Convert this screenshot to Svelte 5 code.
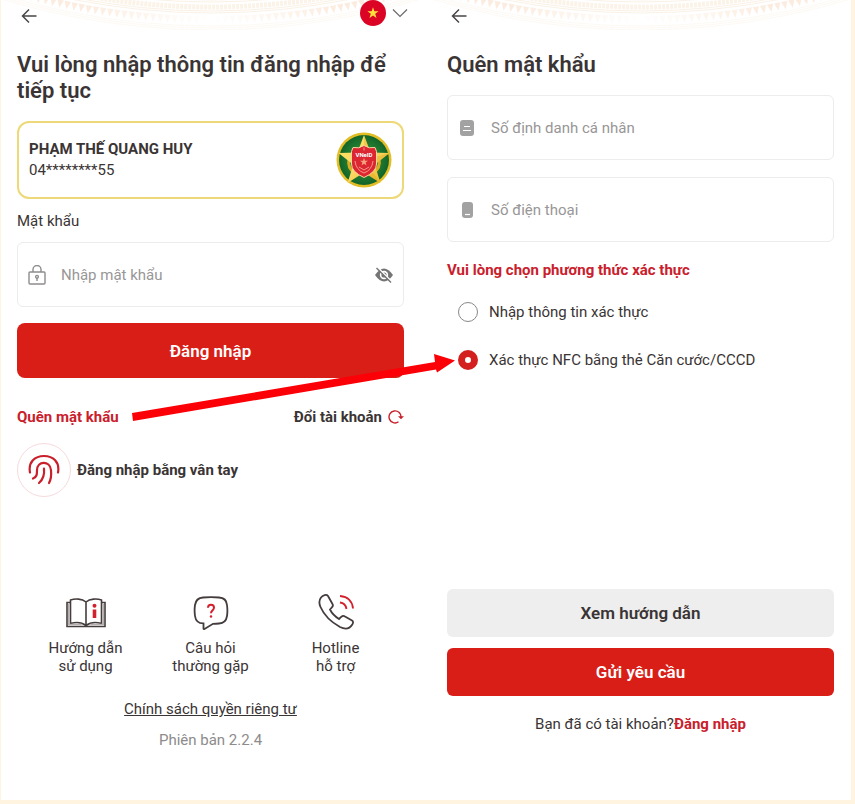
<script lang="ts">
  let idNumber = $state('');
  let phone = $state('');
  let password = $state('');
  let showPassword = $state(false);
  let method = $state('nfc');

  const methods = [
    { value: 'info', label: 'Nhập thông tin xác thực' },
    { value: 'nfc', label: 'Xác thực NFC bằng thẻ Căn cước/CCCD' }
  ];

  // bronze drum ornament: small triangles along an arc
  const drumR = 720;
  const teeth = Array.from({ length: 61 }, (_, i) => {
    const a = ((i - 30) * 0.58 * Math.PI) / 180;
    const point = (r: number, t: number) =>
      `${(210 + r * Math.sin(t)).toFixed(1)},${(24 - drumR + r * Math.cos(t)).toFixed(1)}`;
    return {
      points: `${point(drumR - 8, a - 0.0045)} ${point(drumR - 8, a + 0.0045)} ${point(drumR, a)}`,
      opacity: Math.min(Math.abs(i - 30) / 30, 0.6)
    };
  });
  const rings = [-24, -22, -13, -11, 2, 4, 6];
</script>

{#snippet drum()}
  <svg class="drum" viewBox="0 0 420 30" aria-hidden="true">
    {#each rings as d}
      <circle cx="210" cy={24 - drumR} r={drumR + d} fill="none" stroke="#f9eedf" stroke-width="1" opacity={d > 0 ? 0.35 : 0.8} />
    {/each}
    <circle cx="210" cy={24 - drumR} r={drumR - 17} fill="none" stroke="#f9ebd8" stroke-width="5" stroke-dasharray="3 1" opacity="0.6" />
    {#each teeth as t}
      <polygon points={t.points} fill="#fae0cb" opacity={t.opacity} />
    {/each}
  </svg>
{/snippet}

{#snippet backButton()}
  <button type="button" class="icon-btn" aria-label="Quay lại">
    <svg width="16" height="16" viewBox="0 0 16 16" fill="none" stroke="#4a4646" stroke-width="1.5">
      <path d="M15.500 8H1.500M8 1.500 1.500 8 8 14.500" />
    </svg>
  </button>
{/snippet}

<main class="board">
  <section class="panel">
    {@render drum()}
    <header class="top">
      {@render backButton()}
      <button type="button" class="icon-btn lang" aria-label="Ngôn ngữ">
        <svg width="26" height="26" viewBox="0 0 26 26">
          <circle cx="13" cy="13" r="13" fill="#dc0424" />
          <path d="m13 7.200 1.400 4h4.200l-3.400 2.600 1.300 4.100-3.500-2.500-3.500 2.500 1.300-4.100-3.400-2.600h4.200z" fill="#ffdf3d" />
        </svg>
        <svg width="16" height="10" viewBox="0 0 16 10" fill="none" stroke="#6b6868" stroke-width="1.200">
          <path d="m1 1.500 7 7 7-7" />
        </svg>
      </button>
    </header>

    <h1>Vui lòng nhập thông tin đăng nhập để tiếp tục</h1>

    <div class="account">
      <div>
        <strong>PHẠM THẾ QUANG HUY</strong>
        <span>04********55</span>
      </div>
      <svg width="56" height="56" viewBox="0 0 56 56" aria-hidden="true">
        <defs>
          <linearGradient id="gold" x1="0" y1="0" x2="1" y2="1">
            <stop offset="0" stop-color="#ffe45a" />
            <stop offset="0.5" stop-color="#fbd968" />
            <stop offset="1" stop-color="#e8b71c" />
          </linearGradient>
          <radialGradient id="green">
            <stop offset="0.4" stop-color="#2c8a35" />
            <stop offset="1" stop-color="#126428" />
          </radialGradient>
        </defs>
        <circle cx="28" cy="28" r="27.500" fill="#e2bd26" />
        <circle cx="28" cy="28" r="25" fill="url(#green)" />
        <path d="M13 27q-2 9 6 14M43 27q2 9-6 14" fill="none" stroke="#dcae20" stroke-width="3" />
        <path d="m28 3 6.500 17.500 19 .500-14.800 11.700L44.500 51 28 40.500 11.500 51l5.800-18.300L2.500 21l19-.500z" fill="url(#gold)" />
        <path d="M28 3v25l6.500-7.500zM28 28l25.500-7-14.800 11.700zM28 28l16.500 23L28 40.500z" fill="#d99d16" opacity="0.300" />
        <path d="M17 15.500q6 1.500 11-2 5 3.500 11 2l1.500 4V32q0 8-12.500 13.500Q15.500 40 15.500 32V19.500z" fill="#dc2632" stroke="#f4d7a0" stroke-width="1" />
        <path d="m28 26 1 2.800h3l-2.400 1.800.9 3-2.500-1.800-2.500 1.800.9-3-2.400-1.800h3z" fill="#f7a27d" />
        <path d="M19 29q1 9 9 12 8-3 9-12M23 35l5 3 5-3M28 15.500v3" fill="none" stroke="#f49a86" stroke-width="1" />
        <text x="28" y="24.500" text-anchor="middle" class="badge-text">VNeID</text>
      </svg>
    </div>

    <label class="label" for="password">Mật khẩu</label>
    <div class="field">
      <svg width="18" height="20" viewBox="0 0 18 20" fill="none" stroke="#8e8c8c" stroke-width="1.400">
        <rect x="1" y="7" width="16" height="12" rx="1" />
        <path d="M5 7V4.500a4 4 0 0 1 8 0V7M9 13v3" />
        <circle cx="9" cy="11.800" r="1.400" />
      </svg>
      <input id="password" type={showPassword ? 'text' : 'password'} placeholder="Nhập mật khẩu" bind:value={password} />
      <button type="button" class="icon-btn" aria-label="Hiện mật khẩu" onclick={() => (showPassword = !showPassword)}>
        <svg width="20" height="16" viewBox="0 0 20 16">
          <path d="M1 8q9-13 18 0-9 13-18 0z" fill="#757575" />
          <circle cx="10" cy="8" r="4.200" fill="#fff" />
          <circle cx="10" cy="8" r="2.600" fill="#757575" />
          <path d="M3.700.6 18.200 15" stroke="#fff" stroke-width="1.600" />
          <path d="M2.500 1 17 15.500" stroke="#757575" stroke-width="1.400" />
        </svg>
      </button>
    </div>

    <button type="button" class="btn primary tall">Đăng nhập</button>

    <div class="links">
      <a class="red" href="#forgot">Quên mật khẩu</a>
      <a class="switch" href="#switch">
        Đổi tài khoản
        <svg width="16" height="14" viewBox="0 0 16 14" fill="none" stroke="#c9202c" stroke-width="1.400">
          <path d="M10.500 11.800A6 6 0 1 1 13 7.500" />
          <path d="M10 6.200h6l-3 3z" fill="#c9202c" stroke="none" />
        </svg>
      </a>
    </div>

    <button type="button" class="finger">
      <span class="finger-ring">
        <svg width="32" height="32" viewBox="0 0 32 32" fill="none" stroke="#c9202c" stroke-width="2.200" stroke-linecap="round">
          <path d="M2 18.500C0 8 7 2 16 2s16 6 14 16.500" />
          <path d="M5 24.500c4-1.500 4-4.500 4-8C9 6.500 22 6.500 23 16c.5 5 .5 8.500-2 13" />
          <path d="M16 14.500c.6 6-.8 11-5 14.500" />
        </svg>
      </span>
      Đăng nhập bằng vân tay
    </button>

    <nav class="help">
      <a href="#guide">
        <svg width="40" height="34" viewBox="0 0 40 34" fill="none" stroke="#453d3d" stroke-width="1.600">
          <path d="M20 6C16 2.500 9 2.500 4.500 4v23.500c5-1.500 11-1.500 15.500 2 4.500-3.500 10.500-3.500 15.500-2V4C31 2.500 24 2.500 20 6zv23" />
          <path d="M4.500 6.500H1v24h38v-24h-3.500" />
          <path d="M2.800 8v20.500h13M37.200 8v20.500h-13" stroke="#b5aeae" />
          <path d="M28.500 13.500v8.500" stroke="#d2202c" stroke-width="3.600" />
          <circle cx="28.500" cy="9.800" r="2" fill="#d2202c" stroke="none" />
        </svg>
        <span>Hướng dẫn<br />sử dụng</span>
      </a>
      <a href="#faq">
        <svg width="36" height="34" viewBox="0 0 36 34" fill="none" stroke="#453d3d" stroke-width="1.800">
          <path d="M10 1.500q8-.6 16 0 7.500.500 8 7.500.8 6 0 11-1 7-8 7.500-3 .300-6 .3L11.500 33q-1 .5-1-.6v-5Q3 27.500 2 20q-.8-5.500 0-11 1-7 8-7.500z" />
          <path d="M15 11.800c0-4 6-4 6 0 0 2.400-3 2.500-3 5.500" stroke="#d2202c" stroke-width="2" />
          <circle cx="18" cy="20.500" r="1.200" fill="#d2202c" stroke="none" />
        </svg>
        <span>Câu hỏi<br />thường gặp</span>
      </a>
      <a href="#hotline">
        <svg width="36" height="36" viewBox="0 0 36 36" fill="none" stroke="#453d3d" stroke-width="1.800">
          <path d="M3 3.500C5 1 8.500 0 10 2l4.500 8c1 1.600.3 2.500-2.500 5.500 2 4 5 7 9 9.500 3-3 4-3.800 6-2.500l7 4c1.500 1 1.300 2.500.3 4-2.500 4-6.500 5.500-12.300 2.500C13 28 6 21 2.500 13 .8 9 1 6 3 3.500z" />
          <path d="M22 8.500c4 .5 6 3 6.500 6.500M22 2c8 .5 12.500 5.500 13 12.500" stroke="#d2202c" />
        </svg>
        <span>Hotline<br />hỗ trợ</span>
      </a>
    </nav>
    <a class="privacy" href="#privacy">Chính sách quyền riêng tư</a>
    <p class="version">Phiên bản 2.2.4</p>
  </section>

  <section class="panel">
    {@render drum()}
    <header class="top">
      {@render backButton()}
    </header>

    <h1>Quên mật khẩu</h1>

    <div class="fields">
      <div class="field">
        <svg width="18" height="18" viewBox="0 0 18 18">
          <rect x="2" y="1" width="14" height="16" rx="3" fill="#a2a2a2" />
          <path d="M6 7.500h6M5 11.500h8" stroke="#fff" stroke-width="1.200" />
        </svg>
        <input type="text" aria-label="Số định danh cá nhân" placeholder="Số định danh cá nhân" bind:value={idNumber} />
      </div>
      <div class="field">
        <svg width="18" height="18" viewBox="0 0 18 18">
          <rect x="4" y="1" width="11" height="16" rx="3" fill="#a2a2a2" />
          <path d="M7 13.500h5" stroke="#fff" stroke-width="1.200" />
        </svg>
        <input type="tel" aria-label="Số điện thoại" placeholder="Số điện thoại" bind:value={phone} />
      </div>
    </div>

    <fieldset class="methods">
      <legend>Vui lòng chọn phương thức xác thực</legend>
      {#each methods as m}
        <label>
          <input type="radio" name="method" value={m.value} bind:group={method} />
          {m.label}
        </label>
      {/each}
    </fieldset>

    <div class="actions">
      <button type="button" class="btn secondary">Xem hướng dẫn</button>
      <button type="button" class="btn primary">Gửi yêu cầu</button>
      <p>Bạn đã có tài khoản?<a class="red" href="#login">Đăng nhập</a></p>
    </div>
  </section>

  <svg class="pointer" width="324" height="70" viewBox="0 0 324 70" aria-hidden="true">
    <path d="M1 61 304 10 303 2 324 8.500 306 20.500 305 17.500 2 69z" fill="#fb0007" />
  </svg>
</main>

<style>
  :global(body) { margin: 0; background: #fff4df; }
  .board {
    position: relative;
    display: grid;
    grid-template-columns: 1fr 1fr;
    column-gap: 43px;
    box-sizing: border-box;
    min-height: calc(100vh - 4px);
    margin: 0 4px 4px 1px;
    padding: 0 17px 0 16px;
    background: #fff;
    color: #3a3434;
    font-family: Roboto, "Noto Sans", sans-serif;
    font-size: 15px;
    line-height: 20px;
    overflow: hidden;
  }
  .panel { position: relative; display: flex; flex-direction: column; }
  .drum { position: absolute; top: 0; left: -16px; width: calc(100% + 33px); }
  .top {
    position: relative;
    display: flex;
    justify-content: space-between;
    height: 32px;
    padding-left: 4px;
    margin-bottom: 20px;
  }
  a { color: inherit; text-decoration: none; }
  p { margin: 0; }
  button { font: inherit; color: inherit; cursor: pointer; }
  .icon-btn { display: flex; align-items: center; padding: 0; border: 0; background: none; }
  .lang { gap: 6px; height: 26px; margin-right: -4px; }
  h1 { margin: 0 0 17px; font-size: 22px; line-height: 26px; font-weight: 600; }

  .account {
    display: flex;
    align-items: center;
    justify-content: space-between;
    padding: 9px 10px;
    border: 2px solid #eed978;
    border-radius: 12px;
  }
  .account strong, .account span { display: block; line-height: 21px; }
  .badge-text { font-size: 6px; font-weight: 700; fill: #fff; }
  .label { margin: 12px 0 11px; }

  .field {
    display: flex;
    align-items: center;
    gap: 15px;
    height: 63px;
    padding: 0 9px 0 10px;
    border: 1px solid #ececec;
    border-radius: 6px;
  }
  .field input {
    flex: 1;
    min-width: 0;
    padding: 0;
    border: 0;
    outline: none;
    background: none;
    font: inherit;
    color: inherit;
  }
  .field input::placeholder { color: #989696; opacity: 1; }
  .fields { display: flex; flex-direction: column; gap: 17px; }

  .btn { height: 48px; border: 0; border-radius: 6px; font-size: 17px; font-weight: 600; }
  .tall { height: 55px; margin-top: 16px; border-radius: 8px; }
  .primary { background: #d91e18; color: #fff; }
  .secondary { background: #eee; }

  .account strong, .links, .finger, .methods legend, .red { font-weight: 700; }

  .links { display: flex; justify-content: space-between; margin-top: 29px; }
  .red { color: #c9202c; }
  .switch { display: flex; align-items: center; gap: 6px; }
  .finger {
    display: flex;
    align-items: center;
    align-self: flex-start;
    gap: 6px;
    margin-top: 16px;
    padding: 0;
    border: 0;
    background: none;
  }
  .finger-ring {
    display: grid;
    place-items: center;
    width: 52px;
    height: 52px;
    border: 1px solid #f7dadd;
    border-radius: 50%;
  }

  .help {
    display: grid;
    grid-template-columns: repeat(3, 1fr);
    margin: auto 6px 24px;
    line-height: 18px;
    text-align: center;
  }
  .help a { display: flex; flex-direction: column; align-items: center; justify-content: flex-end; gap: 9px; }
  .privacy { align-self: center; text-decoration: underline; }
  .version { margin: 11px 0 50px; color: #8d8b8b; text-align: center; }

  .methods { margin: 18px 0 0; padding: 0; border: 0; }
  .methods legend { padding: 0; color: #c9202c; }
  .methods label { display: flex; align-items: center; gap: 11px; margin: 22px 0 28px 11px; }
  .methods label + label { margin-top: 0; }
  .methods input {
    appearance: none;
    box-sizing: border-box;
    width: 20px;
    height: 20px;
    margin: 0;
    border: 1px solid #888;
    border-radius: 50%;
    background: #fff;
  }
  .methods input:checked { border: 7px solid #d3201f; }

  .actions { display: flex; flex-direction: column; gap: 11px; margin: auto 0 66px; }
  .actions p { margin-top: 7px; text-align: center; }

  .pointer { position: absolute; top: 352px; left: 130px; pointer-events: none; }
</style>
